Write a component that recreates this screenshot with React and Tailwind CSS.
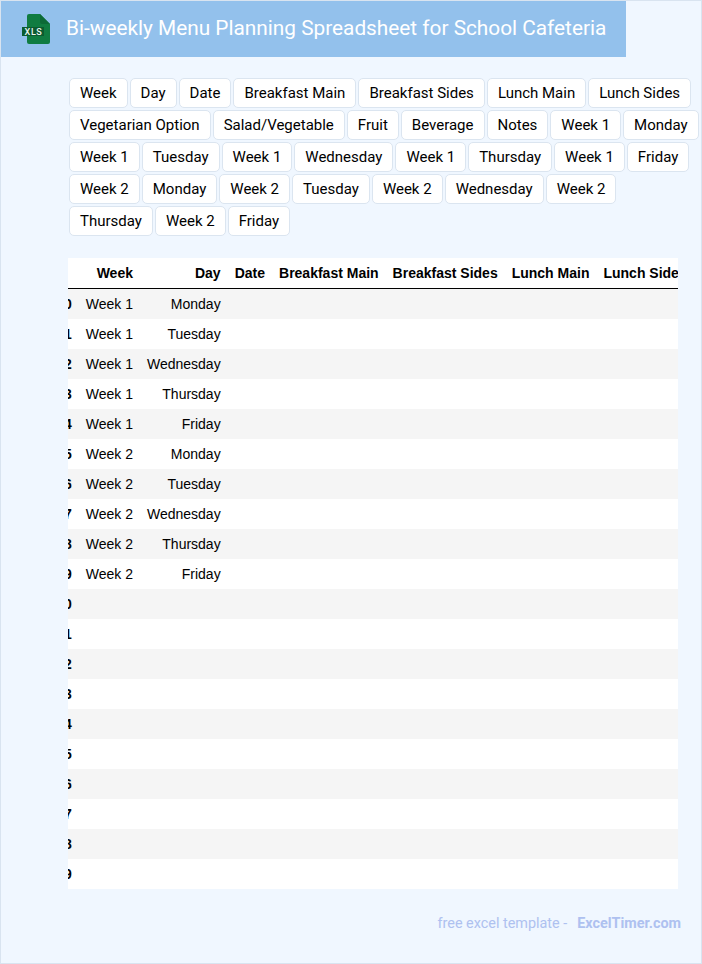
import React from 'react';

const tags = [
  'Week', 'Day', 'Date', 'Breakfast Main', 'Breakfast Sides', 'Lunch Main', 'Lunch Sides',
  'Vegetarian Option', 'Salad/Vegetable', 'Fruit', 'Beverage', 'Notes',
  'Week 1', 'Monday', 'Week 1', 'Tuesday', 'Week 1', 'Wednesday', 'Week 1', 'Thursday', 'Week 1', 'Friday',
  'Week 2', 'Monday', 'Week 2', 'Tuesday', 'Week 2', 'Wednesday', 'Week 2', 'Thursday', 'Week 2', 'Friday',
];

const columns = ['Week', 'Day', 'Date', 'Breakfast Main', 'Breakfast Sides', 'Lunch Main', 'Lunch Sides', 'Vegetarian Option'];

const days = ['Monday', 'Tuesday', 'Wednesday', 'Thursday', 'Friday'];
const rows = Array.from({ length: 20 }, (_, i) => {
  if (i >= 10) return { week: '', day: '' };
  return { week: i < 5 ? 'Week 1' : 'Week 2', day: days[i % 5] };
});

function XlsIcon() {
  return (
    <svg width="28" height="30" viewBox="0 0 28 30" className="shrink-0">
      <path d="M5 2 Q5 0 7 0 H18 L28 10 V28 Q28 30 26 30 H7 Q5 30 5 28 Z" fill="#107c41" />
      <path d="M18 0 L28 10 H20 Q18 10 18 8 Z" fill="#0c6a37" />
      <rect x="0" y="13" width="22" height="9" fill="#0b5c30" />
      <text x="11.5" y="20.5" textAnchor="middle" fontSize="9" fontWeight="500" fontFamily="Roboto, sans-serif" fill="#eef6f0" letterSpacing="0.6">XLS</text>
    </svg>
  );
}

export default function App() {
  return (
    <div className="h-screen overflow-hidden border border-[#d9e4f0] bg-[#f0f7ff] font-['Roboto',sans-serif]">
      <div className="flex h-14 w-[625px] items-center bg-[#93c1ec] pl-[21px]">
        <XlsIcon />
        <h1 className="ml-4 text-[20.8px] font-normal whitespace-nowrap text-white">
          Bi-weekly Menu Planning Spreadsheet for School Cafeteria
        </h1>
      </div>

      <div className="mt-[21px] ml-[68px] flex flex-wrap gap-0.5 pr-0.5">
        {tags.map((tag, i) => (
          <span
            key={i}
            className="flex h-[30px] items-center rounded-[5px] border border-[#dbe5f0] bg-white px-2.5 text-[15px] text-black"
          >
            {tag}
          </span>
        ))}
      </div>

      <div className="mt-[22px] ml-[67px] w-[610px] overflow-hidden bg-white">
        <table className="-ml-[19.25px] border-separate border-spacing-0 font-['Liberation_Sans',sans-serif] text-sm whitespace-nowrap text-black">
          <thead>
            <tr className="h-[31px]">
              <th className="min-w-[30px] border-b border-black px-[7px]"></th>
              {columns.map((c) => (
                <th key={c} className="border-b border-black px-[7px] text-right font-bold">{c}</th>
              ))}
            </tr>
          </thead>
          <tbody>
            {rows.map((r, i) => (
              <tr key={i} className={i % 2 === 0 ? 'h-[30px] bg-[#f5f5f5]' : 'h-[30px] bg-white'}>
                <th className="px-[7px] text-right font-bold">{i}</th>
                <td className="px-[7px] text-right">{r.week}</td>
                <td className="px-[7px] text-right">{r.day}</td>
                {columns.slice(2).map((c) => (
                  <td key={c} className="px-[7px]"></td>
                ))}
              </tr>
            ))}
          </tbody>
        </table>
      </div>

      <div className="mt-6 flex justify-end pr-5 text-[14.4px] text-[#aec1f0]">
        <span>free excel template -</span>
        <span className="ml-2.5 font-bold">ExcelTimer.com</span>
      </div>
    </div>
  );
}
